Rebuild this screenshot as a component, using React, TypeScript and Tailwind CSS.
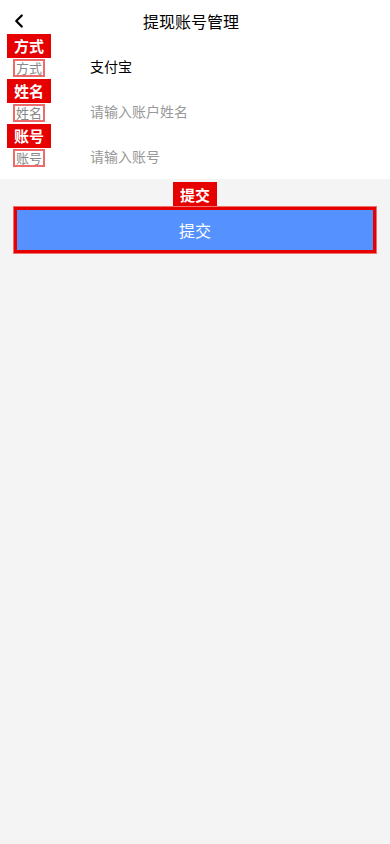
import { ChevronLeft } from "lucide-react";

const rows = [
  { key: "方式", value: "支付宝", filled: true },
  { key: "姓名", value: "请输入账户姓名", filled: false },
  { key: "账号", value: "请输入账号", filled: false },
];

function Tag({ text }: { text: string }) {
  return (
    <span className="inline-flex h-[24px] items-center bg-[#e60000] px-[7px] text-[15px] font-bold leading-none text-white">
      {text}
    </span>
  );
}

export default function App() {
  return (
    <div
      className="min-h-[844px] bg-[#f4f4f4]"
      style={{ fontFamily: '"Noto Sans CJK SC", "Noto Sans", sans-serif' }}
    >
      <div className="bg-white pb-[11px]">
        <div className="relative flex h-[33px] items-center justify-center">
          <ChevronLeft className="absolute left-[8px] top-[10px] h-[22px] w-[22px] text-black" strokeWidth={2.5} />
          <h1 className="pt-[8px] pr-[8px] text-[16px] leading-none text-black">提现账号管理</h1>
        </div>
        {rows.map((r) => (
          <div key={r.key} className="flex h-[45px] flex-col">
            <div className="pl-[7px]">
              <Tag text={r.key} />
            </div>
            <div className="flex h-[20px] items-center">
              <span className="ml-[13px] flex h-[18px] w-[32px] items-center justify-center border-2 border-[#ee6b6b] text-[13px] leading-none text-[#888]">
                {r.key}
              </span>
              <span
                className={`mb-[3px] ml-[45px] text-[14px] leading-none ${r.filled ? "text-black" : "text-[#999]"}`}
              >
                {r.value}
              </span>
            </div>
          </div>
        ))}
      </div>
      <div className="flex justify-center pt-[3px]">
        <Tag text="提交" />
      </div>
      <div className="mx-[13px] border border-[#f07070]">
        <button className="flex h-[46px] w-full items-center justify-center border-[3px] border-[#e60000] bg-[#5591ff] text-[16px] text-white">
          提交
        </button>
      </div>
    </div>
  );
}
